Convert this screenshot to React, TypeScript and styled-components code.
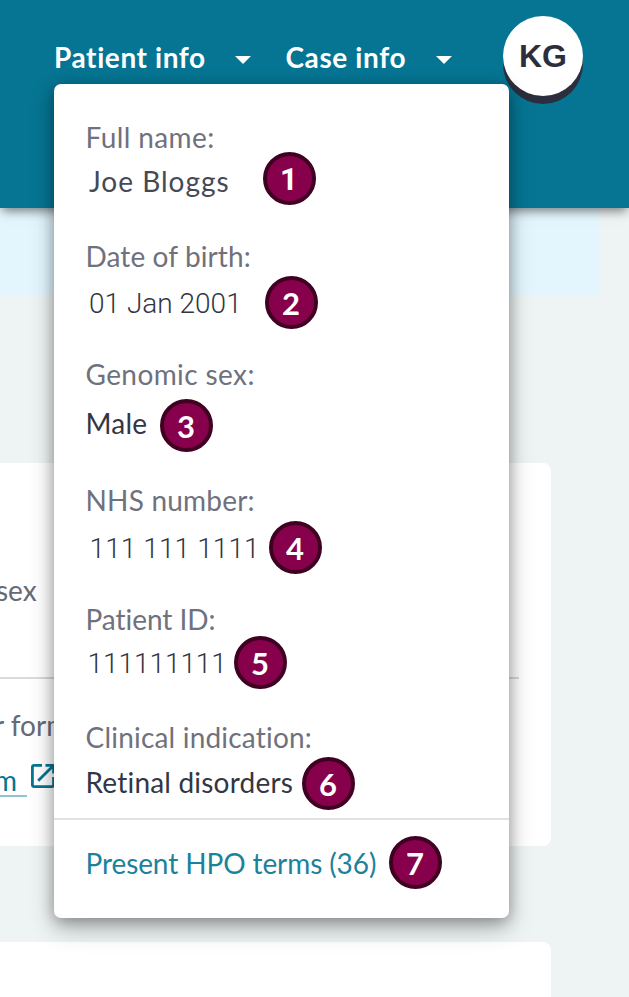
import React from 'react';
import styled, { createGlobalStyle } from 'styled-components';

const GlobalStyle = createGlobalStyle`
  * { box-sizing: border-box; }
  body {
    margin: 0;
    overflow: hidden;
    background: #eef3f4;
    font-family: Lato, "Liberation Sans", sans-serif;
    font-size: 28px;
  }
`;

const Page = styled.div`
  position: relative;
  width: 629px;
  height: 997px;
  overflow: hidden;
  background: #eef3f4;
`;

const Header = styled.header`
  position: relative;
  display: flex;
  align-items: flex-start;
  height: 208px;
  padding: 16px 46px 0 54px;
  background: #067593;
  box-shadow: 0 5px 10px -2px rgba(0, 0, 0, 0.5);
`;

const NavItem = styled.div<{ $width: number; $gap: number }>`
  display: flex;
  align-items: center;
  justify-content: space-between;
  width: ${(p) => p.$width}px;
  height: 82px;
  margin-left: ${(p) => p.$gap}px;
  color: #fff;
  font-weight: 700;
  letter-spacing: 0.6px;
  white-space: nowrap;
`;

const Caret = styled.svg`
  display: block;
  width: 18px;
  height: 10px;
  margin-top: 5px;
`;

const Avatar = styled.div`
  display: flex;
  align-items: center;
  justify-content: center;
  width: 80px;
  height: 80px;
  margin-left: auto;
  border-radius: 50%;
  background: #fff;
  box-shadow: 0 8px 0 #2b2f3d;
  color: #2b2f3d;
  font: 700 32px "Liberation Sans", Arial, sans-serif;
`;

const Banner = styled.div`
  width: 600px;
  height: 87px;
  background: #e3f6fe;
`;

const Card = styled.section<{ $height: number; $gap: number }>`
  width: 551px;
  height: ${(p) => p.$height}px;
  margin-top: ${(p) => p.$gap}px;
  border-radius: 0 8px 8px 0;
  background: #fff;
  overflow: hidden;
`;

const CardTop = styled.div`
  display: flex;
  align-items: center;
  width: 519px;
  height: 216px;
  padding-top: 39px;
  border-bottom: 2px solid #d9dadb;
`;

const Fragment = styled.span<{ $shift: number }>`
  margin-left: ${(p) => p.$shift}px;
  color: #676a75;
  line-height: 34px;
  white-space: nowrap;
`;

const CardBottom = styled.div`
  display: flex;
  flex-direction: column;
  padding-top: 29px;
`;

const ExternalLink = styled.a`
  display: flex;
  align-items: flex-start;
  margin-top: 17px;
  color: #067593;
`;

const LinkText = styled.span`
  width: 27px;
  height: 38px;
  margin-right: 3px;
  padding-top: 4px;
  border-bottom: 2px solid #93c3d0;
  line-height: 34px;
  text-indent: -6px;
`;

const OpenGlyph = styled.svg`
  display: block;
  flex: none;
  width: 26px;
  height: 26px;
  margin-top: 4px;
`;

const Menu = styled.div`
  position: absolute;
  top: 84px;
  left: 53.5px;
  width: 455.5px;
  height: 834px;
  border-radius: 7px;
  background: #fff;
  box-shadow: 0 10px 24px rgba(0, 0, 0, 0.28), 0 3px 14px rgba(0, 0, 0, 0.26);
`;

const Fields = styled.dl`
  display: flex;
  flex-direction: column;
  height: 736px;
  margin: 0;
  padding-left: 32px;
  border-bottom: 2px solid #e0e1e2;
`;

const Field = styled.div<{ $space: number }>`
  margin-top: ${(p) => p.$space}px;
`;

const Label = styled.dt<{ $tracking: number }>`
  color: #6f717c;
  line-height: 30px;
  letter-spacing: ${(p) => p.$tracking}px;
`;

const Row = styled.dd<{ $gap: number }>`
  display: flex;
  align-items: center;
  height: 53px;
  margin: ${(p) => p.$gap}px 0 0;
`;

const Value = styled.span<{
  $width: number; $indent: number; $drop: number; $tracking: number; $numeric: boolean; $soft: boolean;
}>`
  width: ${(p) => p.$width}px;
  margin-top: ${(p) => p.$drop}px;
  padding-left: ${(p) => p.$indent}px;
  color: ${(p) => (p.$numeric ? '#323644' : p.$soft ? '#454956' : '#323645')};
  font-family: ${(p) => (p.$numeric ? 'Roboto, sans-serif' : 'inherit')};
  font-weight: ${(p) => (p.$numeric ? 300 : 400)};
  letter-spacing: ${(p) => p.$tracking}px;
  line-height: 34px;
  white-space: nowrap;
`;

const Badge = styled.span<{ $plainOne: boolean }>`
  display: flex;
  flex: none;
  align-items: center;
  justify-content: center;
  width: 53px;
  height: 53px;
  padding-top: ${(p) => (p.$plainOne ? 2 : 0)}px;
  padding-right: 1px;
  border: 4px solid #400022;
  border-radius: 50%;
  background: #86004b;
  color: #fff;
  font-family: ${(p) => (p.$plainOne ? 'Roboto' : 'Lato')}, sans-serif;
  font-size: 31px;
  font-weight: 700;
  line-height: 40px;
`;

const Terms = styled.div`
  display: flex;
  align-items: center;
  height: 53px;
  margin-top: 16px;
  padding-left: 32px;
`;

const TermsLink = styled.a`
  width: 303.5px;
  color: #1c829c;
  letter-spacing: -0.1px;
  white-space: nowrap;
`;

interface FieldData {
  label: string; labelTracking: number; value: string; tracking: number;
  space: number; gap: number; width: number; indent: number; drop: number;
  numeric?: boolean; soft?: boolean;
}

const fields: FieldData[] = [
  { label: 'Full name:', labelTracking: 0.4, value: 'Joe Bloggs', tracking: 1, space: 38, gap: 0, width: 177.5, indent: 3.5, drop: 4, soft: true },
  { label: 'Date of birth:', labelTracking: 0.1, value: '01 Jan 2001', tracking: 0, space: 36, gap: 5, width: 179.5, indent: 3.5, drop: 2, numeric: true, soft: true },
  { label: 'Genomic sex:', labelTracking: 0.4, value: 'Male', tracking: 0.2, space: 30, gap: 10, width: 74.5, indent: 0, drop: -5 },
  { label: 'NHS number:', labelTracking: 0.2, value: '111 111 1111', tracking: 0.1, space: 33, gap: 6, width: 183.5, indent: 4, drop: 2, numeric: true, soft: true },
  { label: 'Patient ID:', labelTracking: -0.05, value: '111111111', tracking: -0.05, space: 30, gap: 2, width: 148.5, indent: 2, drop: 2, numeric: true, soft: true },
  { label: 'Clinical indication:', labelTracking: 0.2, value: 'Retinal disorders', tracking: 0.2, space: 33, gap: 5, width: 216.5, indent: 0, drop: -4 },
];

function DownCaret() {
  return (
    <Caret viewBox="0 0 18 10">
      <path d="M1 1h16L9 9z" fill="#fff" />
    </Caret>
  );
}

function OpenIcon() {
  return (
    <OpenGlyph viewBox="0 0 26 26" fill="none" stroke="#067593" strokeWidth="2.8">
      <path d="M12 2.4H4.2a1.8 1.8 0 0 0-1.8 1.8v17.6a1.8 1.8 0 0 0 1.8 1.8h17.6a1.8 1.8 0 0 0 1.8-1.8V14" />
      <path d="M15.5 2.4h8.1v8.1M23 3 8.2 17.8" />
    </OpenGlyph>
  );
}

export default function App() {
  return (
    <>
      <GlobalStyle />
      <Page>
        <Header>
          <NavItem $width={197.5} $gap={0}>Patient info <DownCaret /></NavItem>
          <NavItem $width={167} $gap={34}>Case info <DownCaret /></NavItem>
          <Avatar>KG</Avatar>
        </Header>
        <Banner />
        <Card $height={383} $gap={168}>
          <CardTop><Fragment $shift={-4}>sex</Fragment></CardTop>
          <CardBottom>
            <Fragment $shift={-6}>r form</Fragment>
            <ExternalLink><LinkText>m</LinkText><OpenIcon /></ExternalLink>
          </CardBottom>
        </Card>
        <Card $height={70} $gap={96} />
        <Menu>
          <Fields>
            {fields.map((f, i) => (
              <Field key={f.label} $space={f.space}>
                <Label $tracking={f.labelTracking}>{f.label}</Label>
                <Row $gap={f.gap}>
                  <Value $width={f.width} $indent={f.indent} $drop={f.drop} $tracking={f.tracking} $numeric={!!f.numeric} $soft={!!f.soft}>
                    {f.value}
                  </Value>
                  <Badge $plainOne={i === 0}>{i + 1}</Badge>
                </Row>
              </Field>
            ))}
          </Fields>
          <Terms>
            <TermsLink>Present HPO terms (36)</TermsLink>
            <Badge $plainOne={false}>7</Badge>
          </Terms>
        </Menu>
      </Page>
    </>
  );
}
